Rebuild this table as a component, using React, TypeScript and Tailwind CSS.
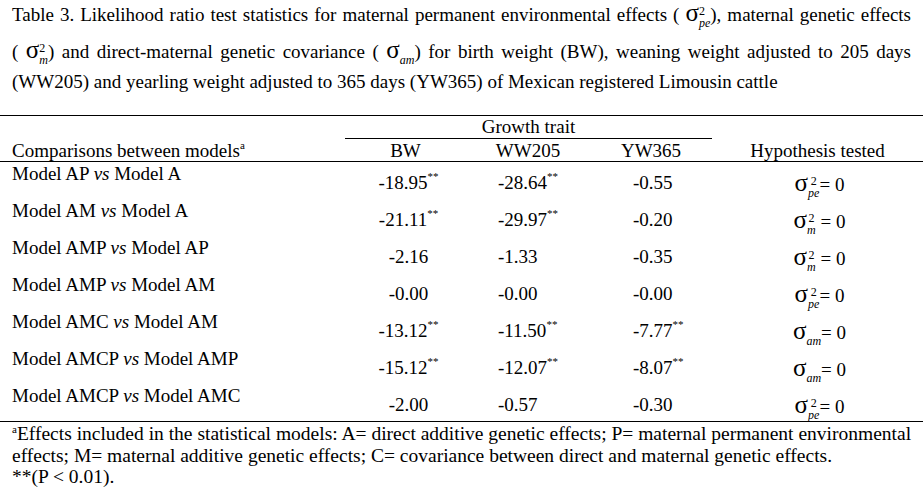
import React from 'react'

type Row = {
  a: string
  b: string
  bw: [string, boolean]
  ww: [string, boolean]
  yw: [string, boolean]
  hyp: 'pe' | 'm' | 'am'
}

const rows: Row[] = [
  { a: 'Model AP', b: 'Model A', bw: ['-18.95', true], ww: ['-28.64', true], yw: ['-0.55', false], hyp: 'pe' },
  { a: 'Model AM', b: 'Model A', bw: ['-21.11', true], ww: ['-29.97', true], yw: ['-0.20', false], hyp: 'm' },
  { a: 'Model AMP', b: 'Model AP', bw: ['-2.16', false], ww: ['-1.33', false], yw: ['-0.35', false], hyp: 'm' },
  { a: 'Model AMP', b: 'Model AM', bw: ['-0.00', false], ww: ['-0.00', false], yw: ['-0.00', false], hyp: 'pe' },
  { a: 'Model AMC', b: 'Model AM', bw: ['-13.12', true], ww: ['-11.50', true], yw: ['-7.77', true], hyp: 'am' },
  { a: 'Model AMCP', b: 'Model AMP', bw: ['-15.12', true], ww: ['-12.07', true], yw: ['-8.07', true], hyp: 'am' },
  { a: 'Model AMCP', b: 'Model AMC', bw: ['-2.00', false], ww: ['-0.57', false], yw: ['-0.30', false], hyp: 'pe' },
]

function Sigma({ sub, sq }: { sub: string; sq?: boolean }) {
  return (
    <span className="whitespace-nowrap">
      <span className="text-[25px] leading-[16px]">σ</span>
      {sq ? (
        <span className="inline-block align-[-6px] text-[12px] leading-[12px]">
          <span className="block">2</span>
          <span className="block italic">{sub}</span>
        </span>
      ) : (
        <span className="inline-block align-[-6px] text-[12px] leading-[12px] italic">{sub}</span>
      )}
    </span>
  )
}

function Num({ v }: { v: [string, boolean] }) {
  return (
    <span className="whitespace-nowrap">
      {v[0]}
      {v[1] && <sup className="text-[11px] -top-[9px]">**</sup>}
    </span>
  )
}

function Hyp({ h }: { h: Row['hyp'] }) {
  if (h === 'pe') return <span><Sigma sub="pe" sq />= 0</span>
  if (h === 'm') return <span><Sigma sub="m" sq /> = 0</span>
  return <span><Sigma sub="am" />= 0</span>
}

export default function App() {
  return (
    <div className="w-[923px] h-[492px] bg-white text-black [font-family:'Liberation_Serif',serif] text-[19px] overflow-hidden">
      <div className="px-[12px] pt-[2px]">
        <div className="h-[37px] leading-[26px] text-justify [text-align-last:justify]">
          Table 3. Likelihood ratio test statistics for maternal permanent environmental effects ( <Sigma sub="pe" sq />), maternal genetic effects
        </div>
        <div className="h-[30px] leading-[26px] text-justify [text-align-last:justify]">
          ( <Sigma sub="m" sq />) and direct-maternal genetic covariance ( <Sigma sub="am" />) for birth weight (BW), weaning weight adjusted to 205 days
        </div>
        <div className="h-[26px] leading-[26px]">
          (WW205) and yearling weight adjusted to 365 days (YW365) of Mexican registered Limousin cattle
        </div>
      </div>

      <div className="mt-[20px] border-t border-black">
        <div className="grid grid-cols-[345px_121px_124px_122px_1fr] border-b border-black">
          <div />
          <div className="col-span-3 h-[23px] leading-[22px] text-center border-b border-black">Growth trait</div>
          <div />
          <div className="h-[22px] leading-[24px] pl-[12px]">
            Comparisons between models<sup className="text-[11px] -top-[8px]">a</sup>
          </div>
          <div className="h-[22px] leading-[24px] text-center">BW</div>
          <div className="h-[22px] leading-[24px] text-center">WW205</div>
          <div className="h-[22px] leading-[24px] text-center">YW365</div>
          <div className="h-[22px] leading-[24px] text-center">Hypothesis tested</div>
        </div>

        <div className="border-b border-black">
          {rows.map((r, i) => (
            <div key={i} className="grid grid-cols-[345px_121px_124px_122px_1fr] h-[37px] leading-[22px]">
              <div className="pl-[12px] pt-[1px]">
                {r.a} <span className="italic">vs</span> {r.b}
              </div>
              <div className="pt-[10px] text-center pl-[6px]">
                <Num v={r.bw} />
              </div>
              <div className="pt-[10px] pl-[32px]">
                <Num v={r.ww} />
              </div>
              <div className="pt-[10px] pl-[43px]">
                <Num v={r.yw} />
              </div>
              <div className="pt-[12px] text-center pl-[4px]">
                <Hyp h={r.hyp} />
              </div>
            </div>
          ))}
        </div>
      </div>

      <div className="px-[12px] pt-[1px] leading-[21.5px] text-[19.5px]">
        <div className="text-justify [text-align-last:justify] whitespace-nowrap">
          <sup className="text-[11px] -top-[7px]">a</sup>Effects included in the statistical models: A= direct additive genetic effects; P= maternal permanent environmental
        </div>
        <div>effects; M= maternal additive genetic effects; C= covariance between direct and maternal genetic effects.</div>
        <div>**(P &lt; 0.01).</div>
      </div>
    </div>
  )
}
